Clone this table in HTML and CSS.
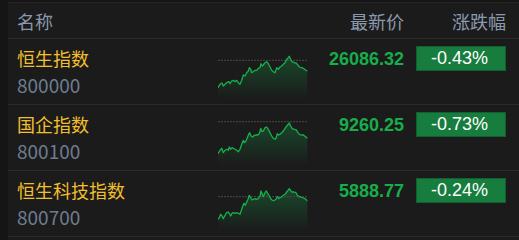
FILE: index.html
```html
<!DOCTYPE html>
<html lang="zh-CN">
<head>
<meta charset="utf-8">
<title>指数</title>
<link rel="stylesheet" href="styles.css">
</head>
<body>
<div class="panel">
  <div class="head">
    <div class="h-name">名称</div>
    <div></div>
    <div class="h-price">最新价</div>
    <div class="h-chg">涨跌幅</div>
  </div>

  <div class="row">
    <div class="name-cell">
      <div class="name">恒生指数</div>
      <div class="code">800000</div>
    </div>
    <svg class="spark" width="90" height="45" viewBox="0 0 90 45">
      <defs>
        <linearGradient id="g1" x1="0" y1="0" x2="0" y2="1">
          <stop offset="0" stop-color="#14a84a" stop-opacity="0.32"/>
          <stop offset="1" stop-color="#14a84a" stop-opacity="0"/>
        </linearGradient>
      </defs>
      <path fill="url(#g1)" d="M0,33.7 L2,30.3 L4,29 L5.3,32 L7,30.3 L8.7,28.7 L10.7,27.7 L12,29.7 L13.7,27 L15.3,26.3 L17,27.7 L18.7,26.3 L20.3,28.7 L22,30.3 L23.7,26.3 L25.3,21 L27,22 L28.7,18.7 L30.3,17 L31.3,13.7 L32.7,15.3 L33.7,18.7 L35.3,17.7 L37,16.3 L38.7,16.3 L40.3,14.3 L42,13.7 L43,9.7 L44.3,12 L45.3,11 L47,8.7 L48.7,7.7 L50.3,9.7 L52,13 L53.7,16.3 L55.3,17.7 L57,18.7 L58.7,13.7 L60.3,15.3 L62,13 L63.7,12 L65.3,10.3 L67,8.7 L68.7,5.3 L70.3,3.7 L71.3,2.3 L72.7,5.3 L74,7.7 L76,8.7 L78,9 L79.3,10.3 L81.3,13 L83.7,13.7 L85.3,14.3 L87,15.7 L89.3,17 L89.3,45 L0,45 Z"/>
      <line x1="0" y1="6.3" x2="90" y2="6.3" class="base"/>
      <polyline class="line" points="0,33.7 2,30.3 4,29 5.3,32 7,30.3 8.7,28.7 10.7,27.7 12,29.7 13.7,27 15.3,26.3 17,27.7 18.7,26.3 20.3,28.7 22,30.3 23.7,26.3 25.3,21 27,22 28.7,18.7 30.3,17 31.3,13.7 32.7,15.3 33.7,18.7 35.3,17.7 37,16.3 38.7,16.3 40.3,14.3 42,13.7 43,9.7 44.3,12 45.3,11 47,8.7 48.7,7.7 50.3,9.7 52,13 53.7,16.3 55.3,17.7 57,18.7 58.7,13.7 60.3,15.3 62,13 63.7,12 65.3,10.3 67,8.7 68.7,5.3 70.3,3.7 71.3,2.3 72.7,5.3 74,7.7 76,8.7 78,9 79.3,10.3 81.3,13 83.7,13.7 85.3,14.3 87,15.7 89.3,17"/>
    </svg>
    <div class="price">26086.32</div>
    <div class="chg">-0.43%</div>
  </div>

  <div class="row">
    <div class="name-cell">
      <div class="name">国企指数</div>
      <div class="code">800100</div>
    </div>
    <svg class="spark" width="90" height="45" viewBox="0 0 90 45">
      <defs>
        <linearGradient id="g2" x1="0" y1="0" x2="0" y2="1">
          <stop offset="0" stop-color="#14a84a" stop-opacity="0.32"/>
          <stop offset="1" stop-color="#14a84a" stop-opacity="0"/>
        </linearGradient>
      </defs>
      <path fill="url(#g2)" d="M0,33.7 L2,30.3 L3.7,28.3 L5.3,32.7 L7,30.3 L8.7,29.3 L10.3,30.3 L11.3,27 L12.7,29.3 L14,27.7 L15.3,28.3 L17,29.3 L18.7,30.3 L20.3,31.7 L22,29.3 L23.7,24.3 L25.3,20.3 L26.3,22.7 L28,21 L29.3,17.7 L30.7,14.3 L31.7,12.7 L33,16 L34.7,17 L36.3,15.3 L38,15 L39.7,15 L41.3,13.7 L42.7,8.3 L44,11.7 L45.3,11 L47,7.7 L48.7,7 L50.3,9.3 L52,12.7 L53.7,16 L55.3,18.3 L57,19.3 L58,18.3 L59.3,13.7 L60.7,15 L62,14.3 L63.7,12.7 L65.3,11 L67,8.3 L68.7,6 L70.3,4.3 L71.3,3 L72.7,6 L74,8.3 L76,9.3 L78,9.7 L79.3,11.7 L81.3,14.3 L83.7,15 L85.3,15 L87,16.3 L89.3,18.3 L89.3,45 L0,45 Z"/>
      <line x1="0" y1="1.7" x2="90" y2="1.7" class="base"/>
      <polyline class="line" points="0,33.7 2,30.3 3.7,28.3 5.3,32.7 7,30.3 8.7,29.3 10.3,30.3 11.3,27 12.7,29.3 14,27.7 15.3,28.3 17,29.3 18.7,30.3 20.3,31.7 22,29.3 23.7,24.3 25.3,20.3 26.3,22.7 28,21 29.3,17.7 30.7,14.3 31.7,12.7 33,16 34.7,17 36.3,15.3 38,15 39.7,15 41.3,13.7 42.7,8.3 44,11.7 45.3,11 47,7.7 48.7,7 50.3,9.3 52,12.7 53.7,16 55.3,18.3 57,19.3 58,18.3 59.3,13.7 60.7,15 62,14.3 63.7,12.7 65.3,11 67,8.3 68.7,6 70.3,4.3 71.3,3 72.7,6 74,8.3 76,9.3 78,9.7 79.3,11.7 81.3,14.3 83.7,15 85.3,15 87,16.3 89.3,18.3"/>
    </svg>
    <div class="price">9260.25</div>
    <div class="chg">-0.73%</div>
  </div>

  <div class="row">
    <div class="name-cell">
      <div class="name">恒生科技指数</div>
      <div class="code">800700</div>
    </div>
    <svg class="spark" width="90" height="45" viewBox="0 0 90 45">
      <defs>
        <linearGradient id="g3" x1="0" y1="0" x2="0" y2="1">
          <stop offset="0" stop-color="#14a84a" stop-opacity="0.32"/>
          <stop offset="1" stop-color="#14a84a" stop-opacity="0"/>
        </linearGradient>
      </defs>
      <path fill="url(#g3)" d="M0,33.3 L1.3,31.7 L2.7,28.3 L4,30 L5.3,32.7 L7,29.3 L8.7,26.7 L10.3,26 L11.3,27.3 L12.7,30 L14,27.3 L15.3,26.7 L17,27.3 L18.7,26.7 L20.3,27.3 L22,28.3 L23.7,23.3 L24.7,20 L26,17.3 L27.3,19.3 L28.7,16 L30,13.3 L31.3,9.3 L32.7,11.7 L34,14 L35.3,13.3 L37,12.7 L38.7,13.3 L40.3,12.7 L42,10 L43,5 L44.3,8.3 L45.3,10.7 L47,6.7 L48.3,5 L49.7,7.3 L51.3,10 L52.7,12.7 L54,14 L55.3,14.7 L57,14 L58,13.3 L59.3,10.7 L60.7,12.7 L62,11.7 L63.7,10.7 L65.3,9.3 L67,8.3 L68.7,6 L70.3,4 L71.3,2.7 L72.7,4.7 L74,6 L76,6 L78,6.7 L79.3,9.3 L81.3,10.7 L83.7,11.3 L85.3,12 L87,12.7 L89.3,14.7 L89.3,45 L0,45 Z"/>
      <line x1="0" y1="10.7" x2="90" y2="10.7" class="base"/>
      <polyline class="line" points="0,33.3 1.3,31.7 2.7,28.3 4,30 5.3,32.7 7,29.3 8.7,26.7 10.3,26 11.3,27.3 12.7,30 14,27.3 15.3,26.7 17,27.3 18.7,26.7 20.3,27.3 22,28.3 23.7,23.3 24.7,20 26,17.3 27.3,19.3 28.7,16 30,13.3 31.3,9.3 32.7,11.7 34,14 35.3,13.3 37,12.7 38.7,13.3 40.3,12.7 42,10 43,5 44.3,8.3 45.3,10.7 47,6.7 48.3,5 49.7,7.3 51.3,10 52.7,12.7 54,14 55.3,14.7 57,14 58,13.3 59.3,10.7 60.7,12.7 62,11.7 63.7,10.7 65.3,9.3 67,8.3 68.7,6 70.3,4 71.3,2.7 72.7,4.7 74,6 76,6 78,6.7 79.3,9.3 81.3,10.7 83.7,11.3 85.3,12 87,12.7 89.3,14.7"/>
    </svg>
    <div class="price">5888.77</div>
    <div class="chg">-0.24%</div>
  </div>
</div>
</body>
</html>
```
FILE: styles.css
```css
html, body {
  margin: 0;
  padding: 0;
  background: #151515;
  width: 519px;
  height: 240px;
  overflow: hidden;
}

.panel {
  margin-left: 8px;
  margin-top: 2px;
  height: 238px;
  background: #1b1b1b;
  border-top: 1px solid #262626;
  font-family: "Noto Sans CJK SC", "Noto Sans", sans-serif;
}

.head,
.row {
  display: grid;
  grid-template-columns: 201px 90px 96px 12px 90px;
  padding-left: 9px;
  border-bottom: 1px solid #2a2a2a;
}

.head {
  height: 33px;
  padding-top: 2px;
  line-height: 33px;
  font-size: 18px;
  color: #8b99ad;
}

.head .h-price {
  text-align: right;
}

.head .h-chg {
  grid-column: 5;
  text-align: right;
}

.row {
  height: 58px;
  padding-top: 7px;
  align-items: start;
}

.name-cell {
  display: flex;
  flex-direction: column;
}

.name {
  font-size: 18px;
  line-height: 25px;
  color: #f2bf2e;
}

.code {
  font-size: 19px;
  line-height: 25px;
  margin-top: 1px;
  color: #6f7c90;
}

.spark {
  display: block;
  margin-top: 8px;
}

.spark .line {
  fill: none;
  stroke: #16b04c;
  stroke-width: 1.3;
  stroke-linejoin: round;
}

.spark .base {
  stroke: #4a4a4a;
  stroke-width: 1;
  stroke-dasharray: 2 1;
}

.price {
  font-family: "Liberation Sans", Arial, sans-serif;
  font-weight: bold;
  font-size: 18px;
  line-height: 26px;
  color: #17ad4b;
  text-align: right;
}

.chg {
  grid-column: 5;
  box-sizing: border-box;
  height: 25px;
  background: #177d3e;
  border: 1px solid #125f30;
  color: #ffffff;
  font-family: "Liberation Sans", Arial, sans-serif;
  font-size: 18px;
  line-height: 23px;
  text-align: center;
  padding-right: 3px;
}
```
